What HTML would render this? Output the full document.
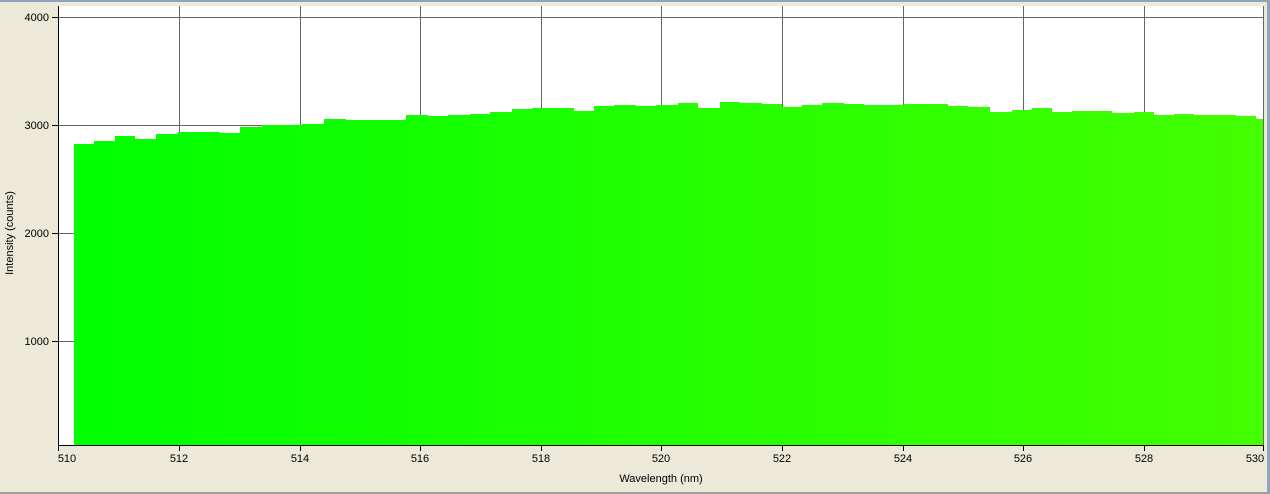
<!DOCTYPE html>
<html><head><style>
body{margin:0;width:1270px;height:494px;overflow:hidden;background:#ece9d8;font-family:"Liberation Sans",sans-serif;}
</style></head><body>
<svg width="1270" height="494" xmlns="http://www.w3.org/2000/svg" style="position:absolute;left:0;top:0">
<defs><linearGradient id="g" x1="0" x2="1" y1="0" y2="0"><stop offset="0" stop-color="#00ff00"/><stop offset="1" stop-color="#44ff00"/></linearGradient></defs>
<rect x="0" y="0" width="1270" height="2" fill="#8da4bf"/>
<rect x="1267" y="0" width="3" height="494" fill="#8da4bf"/>
<rect x="0" y="492" width="1270" height="2" fill="#a0a0a0"/>
<rect x="58" y="6" width="1206" height="439" fill="#fff"/>
<g stroke="#666" stroke-width="1">
<line x1="58" y1="17.5" x2="1264" y2="17.5"/>
<line x1="58" y1="125.5" x2="1264" y2="125.5"/>
<line x1="58" y1="233.5" x2="1264" y2="233.5"/>
<line x1="58" y1="341.5" x2="1264" y2="341.5"/>
<line x1="179.5" y1="6" x2="179.5" y2="445"/>
<line x1="300.5" y1="6" x2="300.5" y2="445"/>
<line x1="420.5" y1="6" x2="420.5" y2="445"/>
<line x1="541.5" y1="6" x2="541.5" y2="445"/>
<line x1="661.5" y1="6" x2="661.5" y2="445"/>
<line x1="782.5" y1="6" x2="782.5" y2="445"/>
<line x1="903.5" y1="6" x2="903.5" y2="445"/>
<line x1="1023.5" y1="6" x2="1023.5" y2="445"/>
<line x1="1144.5" y1="6" x2="1144.5" y2="445"/>
<line x1="1263.5" y1="6" x2="1263.5" y2="445"/>
</g>
<polygon fill="url(#g)" points="74,445 74,144 94,144 94,141 115,141 115,136 135,136 135,139 156,139 156,134 178,134 178,132 220,132 220,133 240,133 240,127 262,127 262,125 302,125 302,124 324,124 324,119 346,119 346,120 406,120 406,115 428,115 428,116 448,116 448,115 470,115 470,114 490,114 490,112 512,112 512,109 532,109 532,108 574,108 574,111 594,111 594,106 614,106 614,105 636,105 636,106 656,106 656,105 678,105 678,103 698,103 698,108 720,108 720,102 740,102 740,103 762,103 762,104 782,104 782,107 802,107 802,105 822,105 822,103 844,103 844,104 864,104 864,105 904,105 904,104 948,104 948,106 968,106 968,107 990,107 990,112 1012,112 1012,110 1032,110 1032,108 1052,108 1052,112 1072,112 1072,111 1112,111 1112,113 1134,113 1134,112 1154,112 1154,115 1174,115 1174,114 1194,114 1194,115 1236,115 1236,116 1256,116 1256,119 1263,119 1263,445"/>
<g stroke="#000" stroke-width="1">
<line x1="58.5" y1="6" x2="58.5" y2="446"/>
<line x1="58" y1="445.5" x2="1264" y2="445.5"/>
<line x1="52" y1="17.5" x2="58" y2="17.5"/>
<line x1="52" y1="125.5" x2="58" y2="125.5"/>
<line x1="52" y1="233.5" x2="58" y2="233.5"/>
<line x1="52" y1="341.5" x2="58" y2="341.5"/>
<line x1="58.5" y1="445" x2="58.5" y2="451"/>
<line x1="179.5" y1="445" x2="179.5" y2="451"/>
<line x1="300.5" y1="445" x2="300.5" y2="451"/>
<line x1="420.5" y1="445" x2="420.5" y2="451"/>
<line x1="541.5" y1="445" x2="541.5" y2="451"/>
<line x1="661.5" y1="445" x2="661.5" y2="451"/>
<line x1="782.5" y1="445" x2="782.5" y2="451"/>
<line x1="903.5" y1="445" x2="903.5" y2="451"/>
<line x1="1023.5" y1="445" x2="1023.5" y2="451"/>
<line x1="1144.5" y1="445" x2="1144.5" y2="451"/>
<line x1="1263.5" y1="445" x2="1263.5" y2="451"/>
</g>
<g font-size="11" fill="#000" font-family="Liberation Sans, sans-serif">
<g text-anchor="end">
<text x="49" y="21">4000</text><text x="49" y="129">3000</text><text x="49" y="237">2000</text><text x="49" y="345">1000</text>
</g>
<g text-anchor="middle">
<text x="67" y="462">510</text><text x="179" y="462">512</text><text x="300" y="462">514</text><text x="420" y="462">516</text><text x="541" y="462">518</text><text x="661" y="462">520</text><text x="782" y="462">522</text><text x="903" y="462">524</text><text x="1023" y="462">526</text><text x="1144" y="462">528</text><text x="1255" y="462">530</text>
<text x="661" y="482">Wavelength (nm)</text>
<text transform="translate(13,233) rotate(-90)">Intensity (counts)</text>
</g>
</g>
</svg>
</body></html>
